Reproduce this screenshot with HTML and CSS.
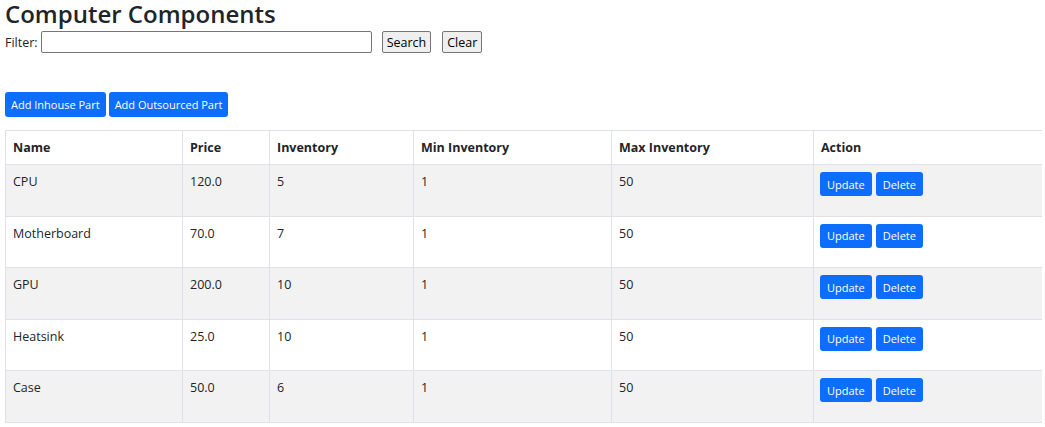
FILE: index.html
```html
<!DOCTYPE html>
<html lang="en">
<head>
<meta charset="utf-8">
<title>Computer Components</title>
<link rel="stylesheet" href="styles.css">
</head>
<body>
<h1 class="title">Computer Components</h1>
<form class="filter">
  <label class="filter-label" for="kw">Filter:</label>
  <input class="filter-input" id="kw" type="text">
  <button class="plain-btn search-btn" type="button">Search</button>
  <button class="plain-btn clear-btn" type="button">Clear</button>
</form>
<div class="add-bar">
  <a class="btn btn-add" href="#">Add Inhouse Part</a>
  <a class="btn btn-add" href="#">Add Outsourced Part</a>
</div>
<table class="parts">
  <colgroup>
    <col class="c-name"><col class="c-price"><col class="c-inv"><col class="c-min"><col class="c-max"><col class="c-act">
  </colgroup>
  <thead>
    <tr><th>Name</th><th>Price</th><th>Inventory</th><th>Min Inventory</th><th>Max Inventory</th><th>Action</th></tr>
  </thead>
  <tbody>
    <tr><td>CPU</td><td>120.0</td><td>5</td><td>1</td><td>50</td><td class="act-cell"><div class="actions"><a class="btn btn-row" href="#">Update</a><a class="btn btn-row" href="#">Delete</a></div></td></tr>
    <tr><td>Motherboard</td><td>70.0</td><td>7</td><td>1</td><td>50</td><td class="act-cell"><div class="actions"><a class="btn btn-row" href="#">Update</a><a class="btn btn-row" href="#">Delete</a></div></td></tr>
    <tr><td>GPU</td><td>200.0</td><td>10</td><td>1</td><td>50</td><td class="act-cell"><div class="actions"><a class="btn btn-row" href="#">Update</a><a class="btn btn-row" href="#">Delete</a></div></td></tr>
    <tr><td>Heatsink</td><td>25.0</td><td>10</td><td>1</td><td>50</td><td class="act-cell"><div class="actions"><a class="btn btn-row" href="#">Update</a><a class="btn btn-row" href="#">Delete</a></div></td></tr>
    <tr><td>Case</td><td>50.0</td><td>6</td><td>1</td><td>50</td><td class="act-cell"><div class="actions"><a class="btn btn-row" href="#">Update</a><a class="btn btn-row" href="#">Delete</a></div></td></tr>
  </tbody>
</table>
</body>
</html>
```
FILE: styles.css
```css
* { box-sizing: border-box; }
body {
  margin: 0 3px 0 5px;
  font-family: "Open Sans", "Noto Sans", sans-serif;
  font-size: 12.5px;
  color: #212529;
  background: #fff;
}
.title {
  margin: 0 0 3px;
  font-size: 24px;
  line-height: 28px;
  font-weight: 600;
}
.filter {
  display: flex;
  align-items: center;
  height: 22px;
  margin: 0;
}
.filter-label { margin-right: 3px; }
.filter-input {
  width: 331px;
  height: 22px;
  border: 1px solid #767676;
  border-radius: 2px;
  padding: 1px 2px;
  font: inherit;
}
.plain-btn {
  height: 22px;
  padding: 0 4px;
  border: 1px solid #767676;
  border-radius: 2px;
  background: #efefef;
  color: #000;
  font: inherit;
  font-size: 12.5px;
}
.search-btn { margin-left: 10px; }
.clear-btn { margin-left: 11px; }
.add-bar {
  display: flex;
  gap: 3px;
  margin-top: 39px;
  margin-bottom: 13px;
}
.btn {
  display: inline-flex;
  align-items: center;
  justify-content: center;
  background: #0d6efd;
  color: #fff;
  text-decoration: none;
  border-radius: 3px;
  font-size: 11px;
}
.btn-add { height: 25px; padding: 0 6px; }
.parts {
  width: 1037px;
  border-collapse: collapse;
  table-layout: fixed;
}
.c-name { width: 177px; }
.c-price { width: 87px; }
.c-inv { width: 144px; }
.c-min { width: 198px; }
.c-max { width: 202px; }
.c-act { width: 229px; }
.parts th, .parts td {
  border: 1px solid #dee2e6;
  padding: 8px 7px;
  text-align: left;
  vertical-align: top;
  line-height: 17px;
}
.parts th { font-weight: 700; }
.parts .act-cell { padding-left: 6px; }
.parts tbody tr:nth-child(odd) td { background: #f2f2f2; }
.actions {
  display: flex;
  gap: 4px;
  height: 35.6px;
  margin-top: -1px;
}
.btn-row { height: 24px; padding: 0 7px; }
```
